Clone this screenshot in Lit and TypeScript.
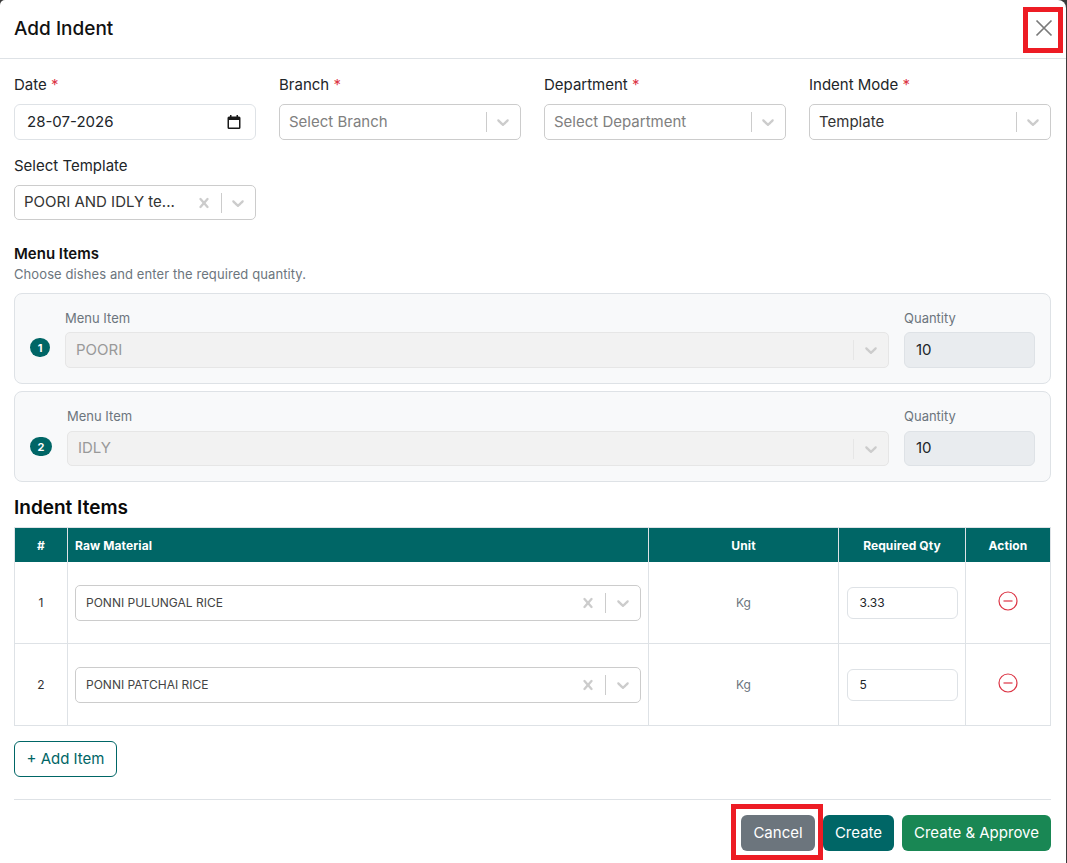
import { LitElement, html, css, nothing } from 'lit';
import { customElement } from 'lit/decorators.js';

const chevron = html`<svg class="chev" width="20" height="20" viewBox="0 0 20 20"><path fill="currentColor" d="M4.516 7.548c.436-.446 1.043-.481 1.576 0L10 11.295l3.908-3.747c.533-.481 1.141-.446 1.574 0 .436.445.408 1.197 0 1.615-.406.418-4.695 4.502-4.695 4.502a1.095 1.095 0 0 1-1.576 0S4.924 9.581 4.516 9.163c-.409-.418-.436-1.17 0-1.615z"/></svg>`;
const cross = html`<svg class="clear" width="20" height="20" viewBox="0 0 20 20"><path fill="currentColor" d="M14.348 14.849a1.2 1.2 0 0 1-1.697 0L10 11.819l-2.651 3.029a1.2 1.2 0 1 1-1.697-1.697l2.758-3.15-2.759-3.152a1.2 1.2 0 1 1 1.697-1.697L10 8.183l2.651-3.031a1.2 1.2 0 1 1 1.697 1.697l-2.758 3.152 2.758 3.15a1.2 1.2 0 0 1 0 1.698z"/></svg>`;

@customElement('app-root')
export class AppRoot extends LitElement {
  static styles = css`
    :host {
      display: block;
      height: 863px;
      overflow: hidden;
      background: #3a3a3a;
      font-family: Inter, "Noto Sans", sans-serif;
      color: #212529;
      position: relative;
    }
    * { box-sizing: border-box; }
    .modal {
      width: 1066px;
      height: 863px;
      background: #fff;
      border-radius: 5px 8px 0 0;
      overflow: hidden;
    }
    .head {
      height: 59px;
      border-bottom: 1px solid #dee2e6;
      display: flex;
      align-items: center;
      justify-content: space-between;
      padding: 0 14px 2px;
    }
    .head h1 {
      margin: 0;
      font-size: 19px;
      font-weight: 500;
      color: #111;
    }
    .close { display: block; margin-right: -2px; color: #7a7a7a; }
    .body { padding: 16px 15px 0 14px; }
    .grid {
      display: grid;
      grid-template-columns: repeat(4, 242px);
      column-gap: 23px;
    }
    .field { height: 81px; }
    .field label {
      display: block;
      font-size: 15px;
      line-height: 20px;
      margin-bottom: 9px;
    }
    .req { color: #dc3545; }
    .ctl {
      height: 36px;
      border: 1px solid #ccc;
      border-radius: 5px;
      background: #fff;
      display: flex;
      align-items: center;
      font-size: 15px;
      color: #333;
      padding-left: 9px;
    }
    .ctl .val {
      flex: 1;
      min-width: 0;
      margin-top: -2px;
      white-space: nowrap;
      overflow: hidden;
    }
    .ctl .ph { color: #808080; }
    .ctl .sep {
      width: 1px;
      height: 20px;
      background: #ccc;
      margin: 0 6px 0 7px;
    }
    .ctl .chev { margin-right: 7px; color: #ccc; flex: none; }
    .ctl .clear { color: #ccc; flex: none; }
    .date {
      border-color: #dee2e6;
      border-radius: 6px;
      padding: 0 14px 0 12px;
      justify-content: space-between;
      color: #212529;
    }
    .date span { margin-top: -2px; }
    .tpl { height: 35px; }
    .tpl-field { height: 73px; }
    .sec-title {
      margin: 15px 0 0;
      font-size: 15px;
      font-weight: 600;
      line-height: 20px;
      color: #111;
    }
    .sec-sub {
      margin: 1px 0 10px;
      font-size: 13px;
      line-height: 18px;
      letter-spacing: .09px;
      color: #6c757d;
    }
    .card {
      height: 91px;
      margin-bottom: 7px;
      border: 1px solid #dee2e6;
      border-radius: 8px;
      background: #f8f9fa;
      display: flex;
      align-items: center;
      padding: 0 15px;
    }
    .badge {
      flex: none;
      width: 20px;
      height: 19px;
      border-radius: 10px;
      background: #006666;
      color: #fff;
      font-size: 11px;
      font-weight: 700;
      display: flex;
      align-items: center;
      justify-content: center;
      margin-top: 18px;
      margin-right: 15px;
    }
    .card.two .badge { width: 22px; margin-top: 20px; }
    .card .col { display: flex; flex-direction: column; }
    .card .grow { flex: 1; min-width: 0; }
    .card .qty { width: 131px; margin-left: 15px; flex: none; }
    .card .lab {
      font-size: 13px;
      line-height: 18px;
      color: #6c757d;
      margin-bottom: 5px;
    }
    .card.two .lab { margin-bottom: 6px; }
    .card.two .ctl, .card.two .num { height: 35px; }
    .dis {
      background: #f2f2f2;
      border-color: #e6e6e6;
      color: #999;
      padding-left: 10px;
    }
    .ctl.dis .sep { background: #e6e6e6; margin: 0 7px; }
    .dis .chev { color: #ccc; }
    .num {
      height: 36px;
      border: 1px solid #dee2e6;
      border-radius: 6px;
      background: #e9ecef;
      font-size: 15px;
      color: #212529;
      display: flex;
      align-items: center;
      padding: 0 0 2px 11px;
    }
    h2 {
      margin: 14px 0 7px;
      font-size: 19px;
      line-height: 24px;
      font-weight: 600;
      color: #0a0a0a;
    }
    .tbl {
      display: grid;
      grid-template-columns: 54px 581px 190px 127px 85px;
      width: 1037px;
      border-top: 1px solid #dee2e6;
    }
    .th {
      height: 34px;
      background: #006666;
      color: #fff;
      font-size: 12px;
      font-weight: 700;
      letter-spacing: .1px;
      display: flex;
      align-items: center;
      justify-content: center;
      border-right: 1px solid #dee2e6;
    }
    .th:first-child { border-left: 1px solid #dee2e6; }
    .th.left { justify-content: flex-start; padding-left: 7px; }
    .td {
      height: 82px;
      border-right: 1px solid #dee2e6;
      border-bottom: 1px solid #dee2e6;
      display: flex;
      align-items: center;
      justify-content: center;
      font-size: 12px;
      color: #333;
    }
    .td.first { border-left: 1px solid #dee2e6; }
    .td.mat { padding: 0 7px; justify-content: stretch; }
    .td.unit { color: #6c757d; }
    .td.mat .ctl { flex: 1; font-size: 12px; color: #444; padding-left: 10px; }
    .td.mat .val { margin-top: 0; }
    .td.mat .sep { margin: 0 7px; }
    .td .inp {
      width: 111px;
      height: 32px;
      border: 1px solid #dee2e6;
      border-radius: 6px;
      font-size: 12px;
      color: #212529;
      display: flex;
      align-items: center;
      padding-left: 12px;
    }
    .rm { display: block; margin-top: -3px; color: #dc3545; }
    .add {
      margin-top: 15px;
      width: 103px;
      height: 36px;
      border: 1px solid #006666;
      border-radius: 6px;
      background: #fff;
      color: #006666;
      font: 15px Inter, sans-serif;
      padding: 0 0 2px;
    }
    .foot {
      margin-top: 22px;
      border-top: 1px solid #dee2e6;
      padding-top: 15px;
      display: flex;
      justify-content: flex-end;
      gap: 8px;
    }
    .btn {
      height: 36px;
      border: 0;
      border-radius: 6px;
      color: #fff;
      font: 15px Inter, sans-serif;
      padding: 0 0 2px;
    }
    .gray { background: #6c757d; width: 74px; }
    .teal { background: #006666; width: 71px; }
    .green { background: #198754; width: 149px; }
    .mark {
      position: absolute;
      border: 5px solid #ed1c24;
      pointer-events: none;
    }
    .mark.x { left: 1023px; top: 7px; width: 40px; height: 46px; }
    .mark.c { left: 731px; top: 804px; width: 92px; height: 56px; }
  `;

  sel (val: string, opts: { ph?: boolean, clear?: boolean, cls?: string } = {}) {
    return html`<div class="ctl ${opts.cls ?? ''}">
      <span class="val ${opts.ph ? 'ph' : ''}">${val}</span>
      ${opts.clear ? cross : nothing}
      <span class="sep"></span>
      ${chevron}
    </div>`;
  }

  field (name: string, req: boolean, ctl: unknown) {
    return html`<div class="field">
      <label>${name}${req ? html` <span class="req">*</span>` : nothing}</label>
      ${ctl}
    </div>`;
  }

  menuCard (n: number, name: string) {
    return html`<div class="card ${n === 2 ? 'two' : ''}">
      <span class="badge">${n}</span>
      <div class="col grow">
        <span class="lab">Menu Item</span>
        ${this.sel(name, { cls: 'dis' })}
      </div>
      <div class="col qty">
        <span class="lab">Quantity</span>
        <div class="num">10</div>
      </div>
    </div>`;
  }

  row (n: number, name: string, qty: string) {
    return html`
      <div class="td first">${n}</div>
      <div class="td mat">${this.sel(name, { clear: true })}</div>
      <div class="td unit">Kg</div>
      <div class="td"><div class="inp">${qty}</div></div>
      <div class="td">
        <svg class="rm" width="20" height="20" viewBox="0 0 20 20" fill="none" stroke="currentColor" stroke-width="1.2">
          <circle cx="10" cy="10" r="9"/>
          <path d="M5.5 10h9"/>
        </svg>
      </div>`;
  }

  render () {
    return html`
      <div class="modal">
        <div class="head">
          <h1>Add Indent</h1>
          <svg class="close" width="20" height="20" viewBox="0 0 20 20" fill="none" stroke="currentColor" stroke-width="1.7">
            <path d="M2.5 2.500l15 15M17.500 2.500l-15 15"/>
          </svg>
        </div>
        <div class="body">
          <div class="grid">
            ${this.field('Date', true, html`<div class="ctl date">
              <span>28-07-2026</span>
              <svg width="14" height="14" viewBox="0 0 14 14"><path fill="#1a1a1a" d="M3 0h1.5v1.5h5V0H11v1.5h1A1.5 1.5 0 0 1 13.5 3v9.500A1.500 1.500 0 0 1 12 14H2A1.500 1.500 0 0 1 .5 12.500V3A1.500 1.500 0 0 1 2 1.500h1zM2 5v7.500h10V5z"/></svg>
            </div>`)}
            ${this.field('Branch', true, this.sel('Select Branch', { ph: true }))}
            ${this.field('Department', true, this.sel('Select Department', { ph: true }))}
            ${this.field('Indent Mode', true, this.sel('Template'))}
          </div>
          <div class="grid">
            <div class="field tpl-field">
              <label>Select Template</label>
              ${this.sel('POORI AND IDLY te...', { clear: true, cls: 'tpl' })}
            </div>
          </div>
          <h3 class="sec-title">Menu Items</h3>
          <p class="sec-sub">Choose dishes and enter the required quantity.</p>
          ${this.menuCard(1, 'POORI')}
          ${this.menuCard(2, 'IDLY')}
          <h2>Indent Items</h2>
          <div class="tbl">
            <div class="th">#</div>
            <div class="th left">Raw Material</div>
            <div class="th">Unit</div>
            <div class="th">Required Qty</div>
            <div class="th">Action</div>
            ${this.row(1, 'PONNI PULUNGAL RICE', '3.33')}
            ${this.row(2, 'PONNI PATCHAI RICE', '5')}
          </div>
          <button class="add">+ Add Item</button>
          <div class="foot">
            <button class="btn gray">Cancel</button>
            <button class="btn teal">Create</button>
            <button class="btn green">Create &amp; Approve</button>
          </div>
        </div>
      </div>
      <div class="mark x"></div>
      <div class="mark c"></div>
    `;
  }
}
